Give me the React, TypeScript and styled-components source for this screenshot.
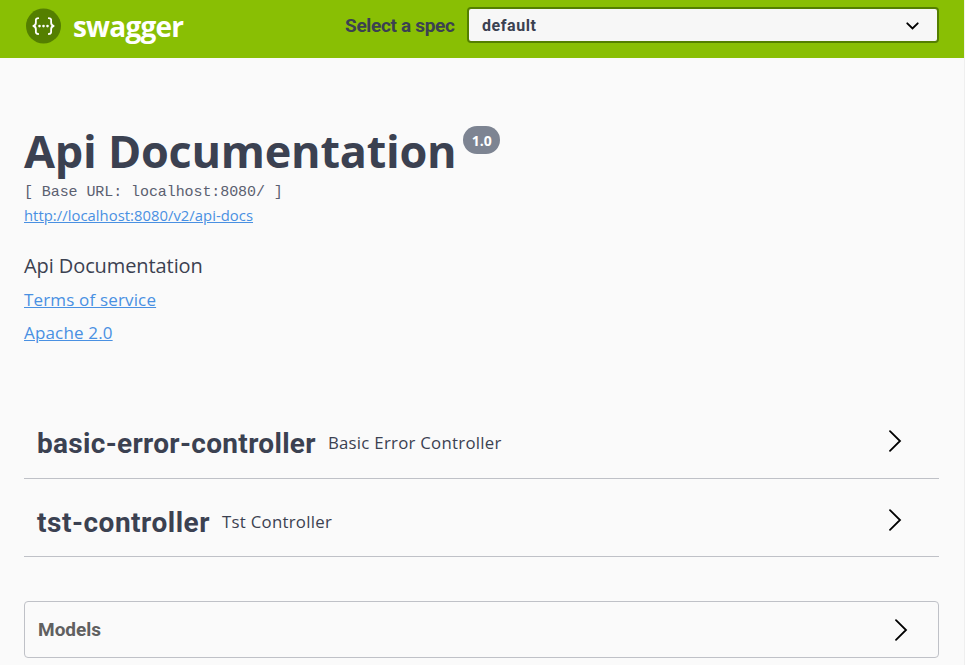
import React from 'react';
import styled, { createGlobalStyle } from 'styled-components';

const open = '"Open Sans", "Noto Sans", sans-serif';
const heading = '"Roboto", "Open Sans", sans-serif';

const GlobalStyle = createGlobalStyle`
  * { box-sizing: border-box; }
  html, body { margin: 0; padding: 0; }
  body { background: #fafafa; color: #3b4151; overflow: hidden; font-family: ${open}; }
`;

const Page = styled.div`
  width: 965px;
  height: 665px;
  border-right: 1px solid #efefef;
  background: #fafafa;
`;

const TopBar = styled.header`
  display: flex;
  align-items: flex-start;
  height: 58px;
  padding: 7px 25px 0 26px;
  background: #89bf04;
`;

const Brand = styled.a`
  display: flex;
  flex: 1;
  height: 38px;
  align-items: center;
  gap: 12px;
`;

const BrandName = styled.span`
  color: #fff;
  font: 700 28px/36px ${open};
  letter-spacing: -0.8px;
`;

const SpecLabel = styled.label`
  width: 122px;
  color: #3b4151;
  font: 700 19px/38px ${heading};
  letter-spacing: -0.32px;
  white-space: nowrap;
`;

const SpecSelect = styled.button`
  display: flex;
  align-items: center;
  justify-content: space-between;
  width: 472px;
  height: 36px;
  padding: 0 18px 0 13px;
  border: 2px solid #547f00;
  border-radius: 4px;
  background: #f7f7f7;
  color: #3b4151;
  font: 700 16px/32px ${heading};
  letter-spacing: 0.55px;

  svg { margin-top: 2px; }
`;

const SpecValue = styled.span`
  padding-top: 2px;
`;

const Content = styled.main`
  display: flex;
  flex-direction: column;
  padding: 66px 25px 0 24px;
`;

const TitleRow = styled.div`
  display: flex;
  height: 59px;
  gap: 7px;
`;

const Title = styled.h1`
  margin: 0;
  font: 700 45px/54px ${open};
  letter-spacing: -0.25px;
  white-space: nowrap;
`;

const Version = styled.span`
  width: 37px;
  height: 28px;
  margin-top: 2px;
  border-radius: 14px;
  background: #7d8492;
  color: #fff;
  font: 700 14px/30px ${open};
  text-align: center;
`;

const BaseUrl = styled.pre`
  height: 20px;
  margin: 0;
  color: #5b6070;
  font: 400 15px/20px "Liberation Mono", monospace;
  letter-spacing: -0.08px;
`;

const TextLink = styled.a<{ $size: number; $height: number; $tracking?: number }>`
  align-self: flex-start;
  color: #4990e2;
  font: 400 ${(p) => p.$size}px/${(p) => p.$height}px ${open};
  letter-spacing: ${(p) => p.$tracking ?? 0}px;
  text-decoration: underline;
`;

const Description = styled.p`
  height: 35px;
  margin: 21px 0 0;
  font: 400 20px/36px ${open};
  letter-spacing: -0.09px;
`;

const Tags = styled.section`
  margin-top: 57px;
`;

const TagRow = styled.div`
  display: flex;
  align-items: center;
  height: 78px;
  padding: 8px 37px 0 13px;
  border-bottom: 1px solid #bfc1c7;

  &:first-child { height: 73px; padding-top: 1px; }
  svg { margin-bottom: 4px; }
`;

const TagName = styled.h3<{ $tracking: number }>`
  margin: 2px 12px 0 0;
  font: 700 28px/34px ${heading};
  letter-spacing: ${(p) => p.$tracking}px;
  white-space: nowrap;
`;

const TagText = styled.small`
  flex: 1;
  font: 400 16.8px/30px ${open};
  letter-spacing: 0.27px;
`;

const Models = styled.section`
  display: flex;
  align-items: center;
  justify-content: space-between;
  height: 57px;
  margin-top: 44px;
  padding: 0 30px 0 13px;
  border: 1px solid #bfc1c7;
  border-radius: 4px;
`;

const ModelsTitle = styled.h4`
  margin: 0;
  color: #606060;
  font: 700 19px/30px ${heading};
`;

const Logo = () => (
  <svg width="35" height="36" viewBox="0 0 35 36" fill="none">
    <circle cx="17.5" cy="18" r="17.5" fill="#547f00" />
    <g stroke="#fff" strokeWidth="1.8" strokeLinecap="round" strokeLinejoin="round">
      <path d="M12.2 10.2C9.7 10.2 9.7 11.6 9.9 14C10 16.3 9.5 17.6 7.4 18C9.5 18.4 10 19.7 9.9 22C9.7 24.6 9.7 26 12.2 26" />
      <path d="M22.8 10.2C25.3 10.2 25.3 11.6 25.1 14C25 16.3 25.5 17.6 27.6 18C25.5 18.4 25 19.7 25.1 22C25.3 24.6 25.3 26 22.8 26" />
    </g>
    <g fill="#fff">
      <circle cx="13.5" cy="18.1" r="1.3" />
      <circle cx="17.5" cy="18.1" r="1.3" />
      <circle cx="21.5" cy="18.1" r="1.3" />
    </g>
  </svg>
);

const Chevron = () => (
  <svg width="14" height="22" viewBox="0 0 14 22" fill="none">
    <path d="M2 1.2L12 11L2 20.8" stroke="#000" strokeWidth="1.8" strokeLinecap="round" />
  </svg>
);

const DownArrow = () => (
  <svg width="13" height="8" viewBox="0 0 13 8" fill="none">
    <path d="M1.3 1.3L6.5 6.5L11.7 1.3" stroke="#000" strokeWidth="1.9" strokeLinecap="round" />
  </svg>
);

const tags = [
  { name: 'basic-error-controller', text: 'Basic Error Controller', tracking: 0.32 },
  { name: 'tst-controller', text: 'Tst Controller', tracking: 0.52 },
];

export default function App() {
  return (
    <Page>
      <GlobalStyle />
      <TopBar>
        <Brand>
          <Logo />
          <BrandName>swagger</BrandName>
        </Brand>
        <SpecLabel>Select a spec</SpecLabel>
        <SpecSelect>
          <SpecValue>default</SpecValue>
          <DownArrow />
        </SpecSelect>
      </TopBar>
      <Content>
        <TitleRow>
          <Title>Api Documentation</Title>
          <Version>1.0</Version>
        </TitleRow>
        <BaseUrl>[ Base URL: localhost:8080/ ]</BaseUrl>
        <TextLink $size={14.8} $height={24} $tracking={0.04}>http://localhost:8080/v2/api-docs</TextLink>
        <Description>Api Documentation</Description>
        <TextLink $size={17} $height={33} $tracking={0.16}>Terms of service</TextLink>
        <TextLink $size={17} $height={33} $tracking={0.16}>Apache 2.0</TextLink>
        <Tags>
          {tags.map((tag) => (
            <TagRow key={tag.name}>
              <TagName $tracking={tag.tracking}>{tag.name}</TagName>
              <TagText>{tag.text}</TagText>
              <Chevron />
            </TagRow>
          ))}
        </Tags>
        <Models>
          <ModelsTitle>Models</ModelsTitle>
          <Chevron />
        </Models>
      </Content>
    </Page>
  );
}
